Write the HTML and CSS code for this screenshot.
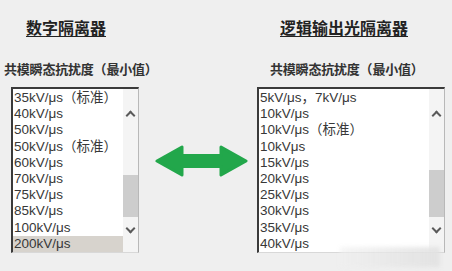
FILE: index.html
```
<!DOCTYPE html>
<html lang="zh-CN">
<head>
    <meta charset="UTF-8">
    <title>共模瞬态抗扰度对比</title>
    <link rel="stylesheet" href="styles.css">
</head>
<body>
    <div class="page">
        <section class="panel panel-left">
            <h2 class="title">数字隔离器</h2>
            <h3 class="label">共模瞬态抗扰度（最小值）</h3>
            <div class="listbox">
                <ul class="items">
                    <li>35kV/μs（标准）</li>
                    <li>40kV/μs</li>
                    <li>50kV/μs</li>
                    <li>50kV/μs（标准）</li>
                    <li>60kV/μs</li>
                    <li>70kV/μs</li>
                    <li>75kV/μs</li>
                    <li>85kV/μs</li>
                    <li>100kV/μs</li>
                    <li class="selected">200kV/μs</li>
                </ul>
                <div class="scrollbar">
                    <div class="btn-up"><span class="chev chev-up"></span></div>
                    <div class="track"></div>
                    <div class="thumb"></div>
                    <div class="btn-down"><span class="chev chev-down"></span></div>
                </div>
            </div>
        </section>

        <div class="arrow">
            <svg width="93" height="32" viewBox="0 0 93 32">
                <path d="M2 16 L27 2 L27 10.5 L66 10.5 L66 2 L91 16 L66 30 L66 21.5 L27 21.5 L27 30 Z"
                      fill="#22a74b" stroke="#22a74b" stroke-width="3" stroke-linejoin="round"/>
            </svg>
        </div>

        <section class="panel panel-right">
            <h2 class="title">逻辑输出光隔离器</h2>
            <h3 class="label">共模瞬态抗扰度（最小值）</h3>
            <div class="listbox">
                <ul class="items">
                    <li>5kV/μs，7kV/μs</li>
                    <li>10kV/μs</li>
                    <li>10kV/μs（标准）</li>
                    <li>10kVμs</li>
                    <li>15kV/μs</li>
                    <li>20kV/μs</li>
                    <li>25kV/μs</li>
                    <li>30kV/μs</li>
                    <li>35kV/μs</li>
                    <li>40kV/μs</li>
                </ul>
                <div class="scrollbar">
                    <div class="btn-up"><span class="chev chev-up"></span></div>
                    <div class="track"></div>
                    <div class="thumb"></div>
                    <div class="btn-down"><span class="chev chev-down"></span></div>
                </div>
            </div>
            <div class="smudge"></div>
        </section>
    </div>
</body>
</html>
```

FILE: styles.css
```
* {
    margin: 0;
    padding: 0;
    box-sizing: border-box;
}

body {
    font-family: "Liberation Sans", Arial, "Noto Sans CJK SC", sans-serif;
    background: #efefef;
    color: #333;
    width: 452px;
    height: 271px;
    overflow: hidden;
}

.page {
    display: flex;
    padding-top: 17px;
}

.panel {
    display: flex;
    flex-direction: column;
}

.panel-left {
    width: 155px;
    padding-left: 4px;
}

.panel-right {
    position: relative;
    width: 204px;
}

.title {
    font-family: "Noto Sans CJK SC", sans-serif;
    font-size: 16px;
    font-weight: bold;
    line-height: 20px;
    color: #222;
    text-decoration: underline;
    text-underline-offset: 2px;
    text-decoration-thickness: 1px;
}

.panel-left .title {
    padding-left: 22px;
}

.panel-right .title {
    padding-left: 32px;
}

.label {
    font-family: "Noto Sans CJK SC", sans-serif;
    font-size: 13px;
    font-weight: bold;
    line-height: 16px;
    color: #333;
    margin-top: 24px;
    letter-spacing: -0.2px;
}

.panel-right .label {
    padding-left: 22px;
}

.listbox {
    display: flex;
    margin-top: 10px;
    height: 166px;
    background: #fff;
    border-top: 2px solid #3a3a3a;
    border-left: 2px solid #3a3a3a;
    border-right: 1px solid #b8b8b8;
    border-bottom: 1px solid #d8d8d8;
}

.panel-left .listbox {
    margin-left: 7px;
    width: 128px;
}

.panel-right .listbox {
    margin-left: 9px;
    width: 188px;
}

.items {
    list-style: none;
    flex: 1;
    padding-top: 1px;
    font-size: 13.5px;
    line-height: 16.2px;
    color: #383838;
}

.items li {
    padding-left: 1px;
    white-space: nowrap;
}

.items .selected {
    background: #d7d3cd;
}

.scrollbar {
    width: 15px;
    display: flex;
    flex-direction: column;
    background: #f4f4f4;
}

.btn-up {
    height: 48px;
    display: flex;
    align-items: center;
    justify-content: center;
}

.track {
    height: 38px;
}

.thumb {
    height: 42px;
    background: #cdcdcd;
}

.btn-down {
    height: 26px;
    display: flex;
    align-items: center;
    justify-content: center;
}

.chev {
    display: block;
    width: 7px;
    height: 7px;
    border-left: 2px solid #5a5a5a;
    border-top: 2px solid #5a5a5a;
}

.chev-up {
    transform: translateY(2px) rotate(45deg);
}

.chev-down {
    transform: translateY(-2px) rotate(225deg);
}

.panel-right .thumb {
    height: 47px;
}

.panel-right .track {
    height: 33px;
}

.arrow {
    width: 93px;
    padding-top: 128px;
}

.arrow svg {
    display: block;
}

.smudge {
    position: absolute;
    left: 92px;
    top: 230px;
    width: 100px;
    height: 20px;
    background: linear-gradient(90deg, rgba(239,239,239,0.6), rgba(225,225,225,0.9));
    filter: blur(2px);
}
```
